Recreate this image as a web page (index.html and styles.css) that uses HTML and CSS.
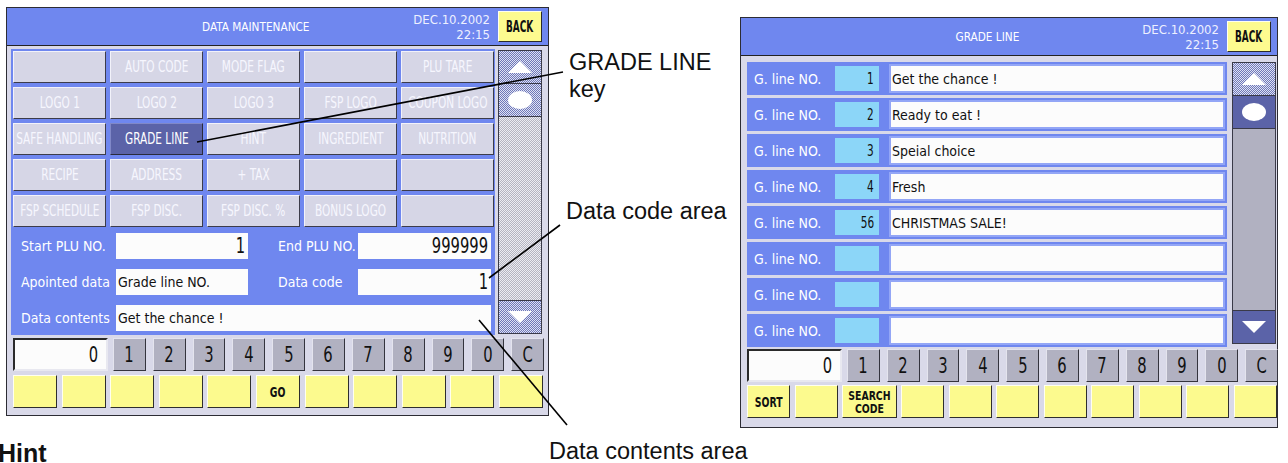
FILE: index.html
```html
<!DOCTYPE html>
<html>
<head>
<meta charset="utf-8">
<link rel="stylesheet" href="styles.css">
</head>
<body>
<div class="page">
  <div class="left-col">
    <div class="panel panel-dm">
      <div class="hdr">
        <div class="title"><span class="c">DATA MAINTENANCE</span></div>
        <div class="date">DEC.10.2002<br>22:15</div>
        <div class="back"><span class="c">BACK</span></div>
      </div>
      <div class="dm-body">
        <div class="upper">
          <div class="blue">
            <div class="keys">
              <div class="key"></div>
              <div class="key"><span class="c">AUTO CODE</span></div>
              <div class="key"><span class="c">MODE FLAG</span></div>
              <div class="key"></div>
              <div class="key"><span class="c">PLU TARE</span></div>
              <div class="key"><span class="c">LOGO 1</span></div>
              <div class="key"><span class="c">LOGO 2</span></div>
              <div class="key"><span class="c">LOGO 3</span></div>
              <div class="key"><span class="c">FSP LOGO</span></div>
              <div class="key"><span class="c">COUPON LOGO</span></div>
              <div class="key"><span class="c">SAFE HANDLING</span></div>
              <div class="key key-sel"><span class="c">GRADE LINE</span></div>
              <div class="key"><span class="c">HINT</span></div>
              <div class="key"><span class="c">INGREDIENT</span></div>
              <div class="key"><span class="c">NUTRITION</span></div>
              <div class="key"><span class="c">RECIPE</span></div>
              <div class="key"><span class="c">ADDRESS</span></div>
              <div class="key"><span class="c">+ TAX</span></div>
              <div class="key"></div>
              <div class="key"></div>
              <div class="key"><span class="c">FSP SCHEDULE</span></div>
              <div class="key"><span class="c">FSP DISC.</span></div>
              <div class="key"><span class="c">FSP DISC. %</span></div>
              <div class="key"><span class="c">BONUS LOGO</span></div>
              <div class="key"></div>
            </div>
            <div class="fields">
              <div class="flabel">Start PLU NO.</div>
              <div class="fval num"><span class="c">1</span></div>
              <div class="flabel flabel2">End PLU NO.</div>
              <div class="fval num"><span class="c">999999</span></div>
              <div class="flabel">Apointed data</div>
              <div class="fval txt">Grade line NO.</div>
              <div class="flabel flabel2">Data code</div>
              <div class="fval num"><span class="c">1</span></div>
              <div class="flabel">Data contents</div>
              <div class="fval txt wide">Get the chance !</div>
            </div>
          </div>
          <div class="scroll">
            <div class="sbtn dither"><svg width="26" height="14" viewBox="0 0 26 14"><polygon points="13,1 25,13 1,13" fill="#fff"/></svg></div>
            <div class="sbtn dither"><svg width="26" height="20" viewBox="0 0 26 20"><ellipse cx="13" cy="10" rx="12" ry="9" fill="#fff"/></svg></div>
            <div class="strack dither-grey"></div>
            <div class="sbtn dither"><svg width="26" height="14" viewBox="0 0 26 14"><polygon points="1,1 25,1 13,13" fill="#fff"/></svg></div>
          </div>
        </div>
        <div class="numrow">
          <div class="disp"><span class="c">0</span></div>
          <div class="nk"><span class="c">1</span></div><div class="nk"><span class="c">2</span></div><div class="nk"><span class="c">3</span></div><div class="nk"><span class="c">4</span></div><div class="nk"><span class="c">5</span></div><div class="nk"><span class="c">6</span></div><div class="nk"><span class="c">7</span></div><div class="nk"><span class="c">8</span></div><div class="nk"><span class="c">9</span></div><div class="nk"><span class="c">0</span></div><div class="nk"><span class="c">C</span></div>
        </div>
        <div class="frow">
          <div class="fk"></div><div class="fk"></div><div class="fk"></div><div class="fk"></div><div class="fk"></div><div class="fk"><span class="c">GO</span></div><div class="fk"></div><div class="fk"></div><div class="fk"></div><div class="fk"></div><div class="fk"></div>
        </div>
      </div>
    </div>
    <h2 class="hint">Hint</h2>
  </div>

  <div class="panel panel-gl">
    <div class="hdr">
      <div class="title"><span class="c">GRADE LINE</span></div>
      <div class="date">DEC.10.2002<br>22:15</div>
      <div class="back"><span class="c">BACK</span></div>
    </div>
    <div class="gl-body">
      <div class="gl-upper">
        <div class="glrows">
          <div class="glrow"><span class="gllabel">G. line NO.</span><span class="glno"><span class="c">1</span></span><span class="gltext">Get the chance !</span></div>
          <div class="glrow"><span class="gllabel">G. line NO.</span><span class="glno"><span class="c">2</span></span><span class="gltext">Ready to eat !</span></div>
          <div class="glrow"><span class="gllabel">G. line NO.</span><span class="glno"><span class="c">3</span></span><span class="gltext">Speial choice</span></div>
          <div class="glrow"><span class="gllabel">G. line NO.</span><span class="glno"><span class="c">4</span></span><span class="gltext">Fresh</span></div>
          <div class="glrow"><span class="gllabel">G. line NO.</span><span class="glno"><span class="c">56</span></span><span class="gltext">CHRISTMAS SALE!</span></div>
          <div class="glrow"><span class="gllabel">G. line NO.</span><span class="glno"></span><span class="gltext"></span></div>
          <div class="glrow"><span class="gllabel">G. line NO.</span><span class="glno"></span><span class="gltext"></span></div>
          <div class="glrow"><span class="gllabel">G. line NO.</span><span class="glno"></span><span class="gltext"></span></div>
        </div>
        <div class="scroll scroll-gl">
          <div class="sbtn dither"><svg width="26" height="14" viewBox="0 0 26 14"><polygon points="13,1 25,13 1,13" fill="#fff"/></svg></div>
          <div class="sbtn solid"><svg width="26" height="20" viewBox="0 0 26 20"><ellipse cx="13" cy="10" rx="12" ry="9" fill="#fff"/></svg></div>
          <div class="strack solid-grey"></div>
          <div class="sbtn solid"><svg width="26" height="14" viewBox="0 0 26 14"><polygon points="1,1 25,1 13,13" fill="#fff"/></svg></div>
        </div>
      </div>
      <div class="numrow">
        <div class="disp"><span class="c">0</span></div>
        <div class="nk"><span class="c">1</span></div><div class="nk"><span class="c">2</span></div><div class="nk"><span class="c">3</span></div><div class="nk"><span class="c">4</span></div><div class="nk"><span class="c">5</span></div><div class="nk"><span class="c">6</span></div><div class="nk"><span class="c">7</span></div><div class="nk"><span class="c">8</span></div><div class="nk"><span class="c">9</span></div><div class="nk"><span class="c">0</span></div><div class="nk"><span class="c">C</span></div>
      </div>
      <div class="frow">
        <div class="fk"><span class="c">SORT</span></div><div class="fk"></div><div class="fk fk2"><span class="c">SEARCH<br>CODE</span></div><div class="fk"></div><div class="fk"></div><div class="fk"></div><div class="fk"></div><div class="fk"></div><div class="fk"></div><div class="fk"></div><div class="fk"></div>
      </div>
    </div>
  </div>
</div>

<div class="callout c-grade">GRADE LINE<br>key</div>
<div class="callout c-code">Data code area</div>
<div class="callout c-contents">Data contents area</div>

<svg class="leaders" width="1288" height="463" viewBox="0 0 1288 463">
  <line x1="197" y1="142" x2="563" y2="72" stroke="#000" stroke-width="1.6"/>
  <line x1="489" y1="278" x2="560" y2="225" stroke="#000" stroke-width="1.6"/>
  <line x1="479" y1="320" x2="567" y2="425" stroke="#000" stroke-width="1.6"/>
</svg>
</body>
</html>
```

FILE: styles.css
```css
* { box-sizing: border-box; margin: 0; padding: 0; }

body {
  width: 1288px;
  height: 463px;
  overflow: hidden;
  background: #fff;
  position: relative;
  font-family: "DejaVu Sans Condensed", "DejaVu Sans", sans-serif;
  font-stretch: condensed;
}

/* narrow terminal-style text */
.c {
  display: inline-block;
  white-space: nowrap;
  transform: scaleX(0.8);
  transform-origin: center;
}

.page {
  display: flex;
  align-items: flex-start;
}

.left-col {
  width: 560px;
  padding: 7px 0 0 6px;
}

.panel {
  border: 1px solid #2c2c34;
  background: #d9d9e9;
}

.panel-dm { width: 543px; height: 409px; }
.panel-gl { width: 538px; height: 411px; margin: 17px 0 0 180px; }

/* header */
.hdr {
  display: grid;
  grid-template-columns: 1fr 44px;
  column-gap: 8px;
  align-items: center;
  height: 38px;
  padding-right: 6px;
  background: #6f87ef;
  border-bottom: 1px solid #222;
}
.title {
  grid-area: 1 / 1;
  text-align: center;
  padding-left: 14px;
  color: #fff;
  font-size: 13px;
}
.title .c { transform: scaleX(0.9); }
.date {
  grid-area: 1 / 1;
  justify-self: end;
  text-align: right;
  color: #eef0ff;
  font-size: 13px;
  line-height: 15px;
}
.back {
  grid-area: 1 / 2;
  height: 31px;
  display: flex;
  align-items: center;
  justify-content: center;
  background: #fdfb8f;
  border: 1px solid;
  border-color: #fffff0 #2a2a2a #2a2a2a #fffff0;
  font-size: 15px;
  font-weight: bold;
  color: #111;
}
.back .c { transform: scaleX(0.66); }

/* left body */
.dm-body { padding: 3px 0 0 4px; }
.upper { display: flex; align-items: flex-start; }
.blue {
  width: 484px;
  height: 286px;
  background: #6f87ef;
  padding: 2px 1px 0 2px;
}
.keys {
  display: grid;
  grid-template-columns: repeat(5, 93px);
  grid-auto-rows: 32px;
  gap: 4px;
}
.key {
  background: #d6d6e6;
  border: 1px solid;
  border-color: #f2f2fa #3c3c4a #3c3c4a #f2f2fa;
  display: flex;
  align-items: center;
  justify-content: center;
  color: #f6f6fe;
  font-size: 15px;
  white-space: nowrap;
  overflow: hidden;
}
.key .c { transform: scaleX(0.78); }
.key-sel {
  background: #5b63a8;
  color: #fff;
  border-color: #8088c8 #2a2a3a #2a2a3a #8088c8;
}

.fields {
  margin-top: 6px;
  display: grid;
  grid-template-columns: 103px 132px 110px 133px;
  grid-auto-rows: 26px;
  row-gap: 10px;
}
.flabel {
  color: #fff;
  font-size: 14px;
  padding-left: 8px;
  display: flex;
  align-items: center;
  white-space: nowrap;
}
.flabel2 { padding-left: 30px; }
.fval {
  background: #fcfcfc;
  display: flex;
  align-items: center;
  color: #111;
}
.fval.num { justify-content: flex-end; font-size: 21px; padding-right: 3px; }
.fval.num .c { transform: scaleX(0.78); transform-origin: right center; }
.fval.txt { font-size: 14px; padding-left: 2px; white-space: nowrap; }
.fval.wide { grid-column: 2 / 5; }

/* scrollbars */
.scroll {
  width: 44px;
  height: 284px;
  margin: 1px 0 0 3px;
  border: 1px solid #3a3a48;
  display: flex;
  flex-direction: column;
}
.sbtn {
  height: 33px;
  flex: none;
  display: flex;
  align-items: center;
  justify-content: center;
  border-bottom: 1px solid #3a3a48;
}
.sbtn:last-child { border-bottom: none; border-top: 1px solid #3a3a48; }
.strack { flex: 1; }
.dither {
  background: repeating-conic-gradient(#6f78b8 0 25%, #dfe2f4 0 50%) 0 0 / 2px 2px;
}
.dither-grey {
  background: repeating-conic-gradient(#b4b4c0 0 25%, #ececf2 0 50%) 0 0 / 2px 2px;
}
.solid { background: #5b63a8; }
.solid-grey { background: #b1b1c1; }

/* number row */
.numrow {
  display: grid;
  grid-template-columns: 93px repeat(11, 1fr);
  column-gap: 7px;
  width: 531px;
  height: 33px;
  margin: 3px 0 0 2px;
}
.disp {
  background: #fcfcfc;
  border: 2px solid;
  border-color: #2a2a2a #e8e8f0 #e8e8f0 #2a2a2a;
  display: flex;
  align-items: center;
  justify-content: flex-end;
  padding-right: 8px;
  font-size: 21px;
  color: #111;
  margin-right: -2px;
}
.disp .c { transform: scaleX(0.78); transform-origin: right center; }
.nk {
  background: #b1b1c1;
  border: 1px solid;
  border-color: #e4e4ee #34343e #34343e #e4e4ee;
  display: flex;
  align-items: center;
  justify-content: center;
  font-size: 21px;
  color: #111;
}
.nk .c { transform: scaleX(0.78); }

/* yellow function row */
.frow {
  display: grid;
  grid-template-columns: repeat(11, 1fr);
  column-gap: 4.5px;
  width: 530px;
  height: 33px;
  margin: 4px 0 0 2px;
}
.fk {
  background: #fcfa8e;
  border: 1px solid;
  border-color: #fffff0 #2e2e2e #2e2e2e #fffff0;
  display: flex;
  align-items: center;
  justify-content: center;
  text-align: center;
  font-size: 14px;
  font-weight: bold;
  color: #111;
}
.fk .c { transform: scaleX(0.74); }
.fk2 { font-size: 13px; line-height: 13px; }
.fk2 .c { transform: scaleX(0.8); }

/* grade line panel */
.gl-body { padding: 6px 0 0 6px; }
.gl-upper { display: flex; align-items: flex-start; }
.glrows {
  width: 480px;
  display: flex;
  flex-direction: column;
  gap: 3px;
}
.glrow {
  height: 33px;
  background: #6f87ef;
  display: grid;
  grid-template-columns: 78px 44px 336px;
  column-gap: 10px;
  align-items: center;
  padding-right: 2px;
}
.gllabel {
  color: #fff;
  font-size: 14px;
  padding-left: 7px;
  white-space: nowrap;
}
.glno {
  height: 25px;
  background: #8cd6f8;
  display: flex;
  align-items: center;
  justify-content: flex-end;
  padding-right: 5px;
  font-size: 15px;
  color: #111;
}
.glno .c { transform: scaleX(0.78); transform-origin: right center; }
.gltext {
  height: 29px;
  background: #fcfcfc;
  border: 2px solid #93a6f6;
  display: flex;
  align-items: center;
  padding-left: 1px;
  font-size: 14px;
  color: #111;
  white-space: nowrap;
}
.scroll-gl { height: 282px; margin: 0 0 0 5px; }
.gl-body .numrow { margin: 2px 0 0 0; }
.gl-body .frow { margin: 3px 0 0 0; }

/* hint heading */
.hint {
  margin: 23px 0 0 -8px;
  font-family: "Liberation Sans", Arial, sans-serif;
  font-stretch: normal;
  font-size: 25px;
  font-weight: bold;
  color: #111;
  line-height: 29px;
}

/* callouts */
.callout {
  position: absolute;
  font-family: "Liberation Sans", Arial, sans-serif;
  font-stretch: normal;
  font-size: 23.5px;
  line-height: 27px;
  color: #111;
  white-space: nowrap;
}
.c-grade { left: 569px; top: 49px; }
.c-code { left: 566px; top: 198px; }
.c-contents { left: 549px; top: 438px; }

.leaders {
  position: absolute;
  left: 0;
  top: 0;
  pointer-events: none;
}
```
